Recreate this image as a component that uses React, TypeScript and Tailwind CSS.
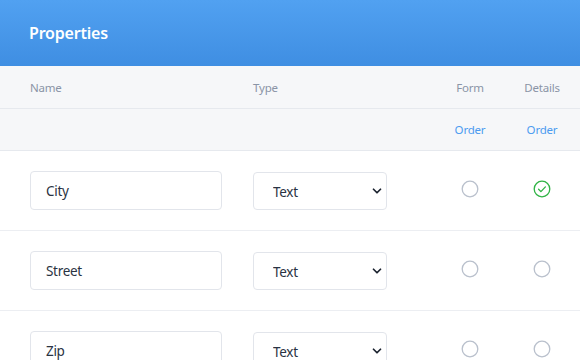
import { ChevronDown } from "lucide-react";

const rows = [
  { name: "City", type: "Text", form: false, details: true },
  { name: "Street", type: "Text", form: false, details: false },
  { name: "Zip", type: "Text", form: false, details: false }
];

function Radio({ checked }: { checked: boolean }) {
  if (checked) {
    return (
      <svg width="18" height="18" viewBox="0 0 18 18" fill="none">
        <circle cx="9" cy="9" r="7.8" stroke="#2fb344" strokeWidth="1.3" />
        <path d="M5.6 9.3l2.3 2.3 4.5-4.7" stroke="#2fb344" strokeWidth="1.3" strokeLinecap="round" strokeLinejoin="round" />
      </svg>
    );
  }
  return (
    <svg width="18" height="18" viewBox="0 0 18 18" fill="none">
      <circle cx="9" cy="9" r="7.8" stroke="#b9c0cc" strokeWidth="1.3" />
    </svg>
  );
}

const grid = "grid grid-cols-[223px_181px_72px_72px] pl-[30px]";

export default function App() {
  return (
    <div className="h-[360px] w-[580px] overflow-hidden bg-white font-['Noto_Sans',sans-serif]">
      <div className="flex h-[66px] items-center bg-gradient-to-b from-[#51a1f1] to-[#3f8ee2] px-[29px]">
        <h1 className="text-[16px] font-semibold tracking-[-0.2px] text-white">Properties</h1>
      </div>
      <div className={`${grid} h-[43px] items-center border-b border-[#e6e9ee] bg-[#f6f7f9] pt-[2px] text-[11.5px] tracking-[-0.2px] text-[#8a94a6]`}>
        <span>Name</span>
        <span>Type</span>
        <span className="text-center">Form</span>
        <span className="text-center">Details</span>
      </div>
      <div className={`${grid} h-[42px] items-center border-b border-[#e6e9ee] bg-[#f6f7f9] text-[11.5px] tracking-[-0.2px] text-[#4b9bf0]`}>
        <span />
        <span />
        <button className="text-center">Order</button>
        <button className="text-center">Order</button>
      </div>
      {rows.map((row) => (
        <div key={row.name} className={`${grid} h-[80px] items-center border-b border-[#eceef2]`}>
          <div>
            <input
              defaultValue={row.name}
              className="h-[39px] w-[192px] rounded-[4px] border border-[#e2e5eb] px-[15px] text-[13.5px] tracking-[-0.3px] text-[#2a3342] outline-none"
            />
          </div>
          <div className="relative h-[38px] w-[134px]">
            <select
              defaultValue={row.type}
              className="h-full w-full appearance-none rounded-[4px] border border-[#e2e5eb] bg-white pl-[19px] pt-[3px] text-[13.5px] tracking-[-0.3px] text-[#2a3342] outline-none"
            >
              <option>Text</option>
              <option>Number</option>
            </select>
            <ChevronDown size={14} strokeWidth={3} className="pointer-events-none absolute right-[3px] top-[12px] text-[#1c2330]" />
          </div>
          <div className="flex justify-center pb-[4px]">
            <Radio checked={row.form} />
          </div>
          <div className="flex justify-center pb-[4px]">
            <Radio checked={row.details} />
          </div>
        </div>
      ))}
    </div>
  );
}
